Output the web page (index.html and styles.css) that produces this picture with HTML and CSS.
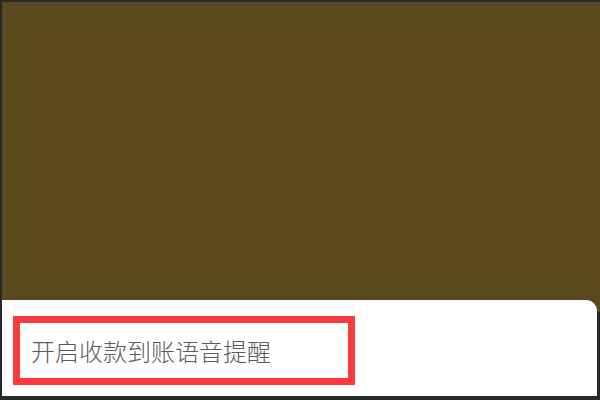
FILE: index.html
```html
<!DOCTYPE html>
<html lang="zh">
<head>
<meta charset="utf-8">
<link rel="stylesheet" href="styles.css">
</head>
<body>
<div class="frame">
  <div class="hero"></div>
  <div class="sheet-row">
    <div class="sheet">
      <div class="highlight">
        <span class="label">开启收款到账语音提醒</span>
      </div>
    </div>
  </div>
</div>
</body>
</html>
```
FILE: styles.css
```css
html, body {
  margin: 0;
  padding: 0;
  background: #282828;
}
.frame {
  width: 600px;
  height: 400px;
  padding: 2px 0 0 2px;
  box-sizing: border-box;
  display: flex;
  flex-direction: column;
  background: #282828;
}
.hero {
  height: 298px;
  background: #5a491d;
  flex: none;
}
.sheet-row {
  height: 96px;
  flex: none;
  display: flex;
  background: linear-gradient(#5a491d 0 12px, #282828 12px);
}
.sheet {
  width: 595px;
  height: 96px;
  background: #ffffff;
  border-top-right-radius: 11px;
  padding: 16px 0 0 11px;
  box-sizing: border-box;
}
.highlight {
  width: 342px;
  height: 69px;
  box-sizing: border-box;
  border: 7px solid #fc393d;
  padding-left: 11px;
  display: flex;
  align-items: center;
}
.label {
  font-family: "Noto Sans CJK SC", "Noto Sans", sans-serif;
  font-size: 24px;
  font-weight: 300;
  line-height: 24px;
  color: #5a5a5a;
  letter-spacing: 0;
}
```
